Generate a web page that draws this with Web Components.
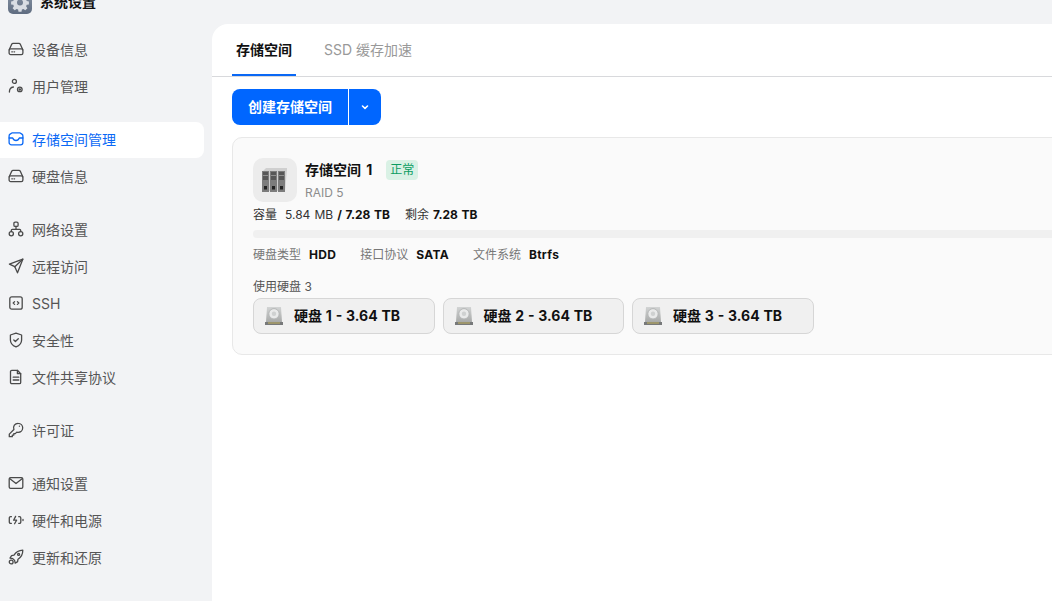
<!DOCTYPE html>
<html lang="zh">
<head>
<meta charset="utf-8">
<title>系统设置</title>
<style>
    html, body { margin: 0; height: 100%; overflow: hidden; background: #f2f3f5; }
    body {
        font-family: Inter, "Noto Sans CJK SC", sans-serif;
        font-size: 12px;
        color: #111;
    }
</style>
</head>
<body>
<settings-app>
    <settings-nav slot="nav"></settings-nav>
    <tab-bar slot="main"></tab-bar>
    <create-button slot="main"></create-button>
    <storage-card slot="main" name="存储空间 1" raid="RAID 5" used="5.84 MB" total="7.28 TB" free="7.28 TB">
        <disk-chip>硬盘 1 - 3.64 TB</disk-chip>
        <disk-chip>硬盘 2 - 3.64 TB</disk-chip>
        <disk-chip>硬盘 3 - 3.64 TB</disk-chip>
    </storage-card>
</settings-app>

<script>
const ICONS = {
    drive: `<path d="M1.200 8.800 3.700 3.200a1.500 1.500 0 0 1 1.400-.9h5.800a1.500 1.500 0 0 1 1.400.9l2.500 5.600"/><rect x="1.100" y="7.800" width="13.800" height="5.800" rx="1.600"/><path d="M3.800 10.800h.6M6 10.800h.6"/>`,
    inbox: `<path d="M1.100 8V5a2.200 2.200 0 0 1 1-1.900l2.200-1.300h7.400l2.200 1.300a2.200 2.200 0 0 1 1 1.900v6.400a2.400 2.400 0 0 1-2.400 2.400H3.500a2.400 2.400 0 0 1-2.400-2.400Z"/><path d="M1.100 7h3.600c.6 1.600 1.800 2.500 3.300 2.500s2.700-.9 3.300-2.500h3.600"/>`,
    user: `<circle cx="6.400" cy="3.400" r="2"/><path d="M1.400 14c0-2.700 1.500-4.700 4-5"/><circle cx="11.800" cy="11.400" r="2.300"/><circle cx="11.800" cy="11.400" r=".6"/>`,
    network: `<rect x="5.900" y="1.200" width="4.200" height="4.200" rx="1.200"/><rect x="1.200" y="10.600" width="4.200" height="4.200" rx="2.100"/><rect x="10.600" y="10.600" width="4.200" height="4.200" rx="2.100"/><path d="M8 5.400v3M3.300 10.600V9.400a1 1 0 0 1 1-1h7.400a1 1 0 0 1 1 1v1.200"/>`,
    send: `<path d="M14.800 1.200 1.400 6.100l5.400 2.600 2.700 6.100Z"/><path d="M14.800 1.200 6.800 8.700"/>`,
    ssh: `<rect x="1.800" y="1.800" width="12.400" height="12.400" rx="2"/><path d="M6.600 6.600 5.200 8l1.400 1.400M9.400 6.600 10.800 8 9.400 9.400"/>`,
    shield: `<path d="M8 1.200 13.600 3v5c0 3.300-2.300 5.600-5.600 6.900C4.700 13.600 2.400 11.300 2.400 8V3Z"/><path d="m5.800 8 1.600 1.500 2.900-2.800"/>`,
    file: `<path d="M3.800 1.300h5.600l3.300 3.400v8.700a1.300 1.300 0 0 1-1.300 1.300H3.800a1.300 1.300 0 0 1-1.300-1.300V2.600a1.300 1.300 0 0 1 1.300-1.300Z"/><path d="M9.400 1.300v3.400h3.300M5.200 8.200h5.600M5.200 11h5.600"/>`,
    key: `<path d="M10.200 1.300a4.500 4.500 0 0 1 0 9c-.5 0-1-.1-1.400-.2L7.300 11.600H5.800v1.500H4.300v1.600H1.300v-2.600l4.600-4.600a4.500 4.500 0 0 1 4.300-6.200Z"/><path d="M11.400 4.200h.1"/>`,
    mail: `<rect x="1.200" y="2.600" width="13.600" height="10.800" rx="1.400"/><path d="m1.600 3.600 6.400 5 6.400-5"/>`,
    power: `<path d="M3.400 4.700H2.600a1.300 1.300 0 0 0-1.300 1.300v4a1.300 1.300 0 0 0 1.300 1.300h.8M10.700 4.700h.8A1.300 1.300 0 0 1 12.800 6v4a1.300 1.300 0 0 1-1.300 1.300h-.8"/><path d="M7.600 4.400 5.600 8.200h3L6.600 11.800M15 7.400v1.200"/>`,
    rocket: `<path d="M14.800 1.200c-4 .2-6.800 1.800-8.800 5L3.600 6.600 2 9l2.800.6 1.800 1.800.6 2.800 2.400-1.600.4-2.400c3.200-2 4.800-4.800 4.800-9Z"/><circle cx="10.600" cy="5.400" r="1"/><circle cx="3.200" cy="13" r="1.900"/>`
};

const NAV_GROUPS = [
    [["drive", "设备信息"], ["user", "用户管理"]],
    [["inbox", "存储空间管理", true], ["drive", "硬盘信息"]],
    [["network", "网络设置"], ["send", "远程访问"], ["ssh", "SSH"], ["shield", "安全性"], ["file", "文件共享协议"]],
    [["key", "许可证"]],
    [["mail", "通知设置"], ["power", "硬件和电源"], ["rocket", "更新和还原"]]
];

const appTemplate = document.createElement("template");
appTemplate.innerHTML = `
    <style>
        :host {
            display: flex;
            height: 601px;
            overflow: hidden;
        }
        #side {
            width: 212px;
            flex: none;
        }
        #main {
            flex: 1;
            min-width: 0;
            margin-top: 24px;
            background: #fff;
            border-top-left-radius: 16px;
        }
    </style>
    <div id="side"><slot name="nav"></slot></div>
    <div id="main"><slot name="main"></slot></div>
`;

class SettingsApp extends HTMLElement {
    constructor() {
        super();
        this.attachShadow({mode: "open"}).appendChild(appTemplate.content.cloneNode(true));
    }
}
customElements.define("settings-app", SettingsApp);

class NavItem extends HTMLElement {
    static get observedAttributes() {
        return ["icon"];
    }

    constructor() {
        super();
        this.attachShadow({mode: "open"}).innerHTML = `
            <style>
                :host {
                    display: flex;
                    align-items: center;
                    gap: 8px;
                    width: 204px;
                    height: 36px;
                    box-sizing: border-box;
                    padding: 0 0 2px 8px;
                    border-radius: 0 8px 8px 0;
                    font-size: 14px;
                    color: #555;
                }
                :host([active]) {
                    background: #fff;
                    color: #0a68f5;
                }
                svg {
                    width: 16px;
                    height: 16px;
                    flex: none;
                    fill: none;
                    stroke: currentColor;
                    stroke-width: 1.300;
                    stroke-linecap: round;
                    stroke-linejoin: round;
                }
                :host(:not([active])) svg { color: #4a4a4a; }
            </style>
            <svg viewBox="0 0 16 16"></svg>
            <span><slot></slot></span>
        `;
        this.iconElem = this.shadowRoot.querySelector("svg");
    }

    attributeChangedCallback(name, oldValue, newValue) {
        if (name === "icon") this.iconElem.innerHTML = ICONS[newValue];
    }
}
customElements.define("nav-item", NavItem);

class SettingsNav extends HTMLElement {
    constructor() {
        super();
        const root = this.attachShadow({mode: "open"});
        root.innerHTML = `
            <style>
                :host { display: block; }
                #head {
                    display: flex;
                    align-items: center;
                    gap: 8px;
                    height: 24px;
                    margin: -10px 0 18px 8px;
                    font-size: 14px;
                    font-weight: 600;
                    color: #111;
                }
                #head span { padding-bottom: 2px; }
                #logo {
                    width: 24px;
                    height: 24px;
                    border-radius: 5px;
                    background: linear-gradient(#8b97a8, #5f6c80);
                }
                #logo svg { display: block; }
                .group {
                    display: flex;
                    flex-direction: column;
                    gap: 1px;
                    margin-bottom: 17px;
                }
            </style>
            <div id="head">
                <div id="logo">
                    <svg width="24" height="24" viewBox="0 0 24 24" fill="#d9dde3">
                        <path fill-rule="evenodd" d="M10.500 4h3l.4 2.200 1.500.6 1.900-1.300 2.100 2.100-1.300 1.900.6 1.500 2.200.4v3l-2.200.4-.6 1.500 1.300 1.900-2.100 2.100-1.900-1.300-1.500.6-.4 2.200h-3l-.4-2.200-1.500-.6-1.900 1.300-2.100-2.100 1.300-1.900-.6-1.500-2.200-.4v-3l2.200-.4.6-1.500-1.300-1.900 2.100-2.100 1.900 1.300 1.500-.6ZM12 9.500a3 3 0 1 0 0 6 3 3 0 0 0 0-6Z"/>
                    </svg>
                </div>
                <span>系统设置</span>
            </div>
        `;
        for (const group of NAV_GROUPS) {
            const groupElem = document.createElement("div");
            groupElem.className = "group";
            for (const [icon, label, active] of group) {
                const item = document.createElement("nav-item");
                item.setAttribute("icon", icon);
                if (active) item.setAttribute("active", "");
                item.textContent = label;
                groupElem.appendChild(item);
            }
            root.appendChild(groupElem);
        }
    }
}
customElements.define("settings-nav", SettingsNav);

class TabBar extends HTMLElement {
    constructor() {
        super();
        this.attachShadow({mode: "open"}).innerHTML = `
            <style>
                :host {
                    display: flex;
                    gap: 24px;
                    height: 53px;
                    box-sizing: border-box;
                    padding-left: 20px;
                    border-bottom: 1px solid #d8d9dc;
                    font-size: 14px;
                    color: #999;
                }
                div {
                    height: 52px;
                    box-sizing: border-box;
                    padding: 0 4px;
                    line-height: 52px;
                }
                .on {
                    color: #111;
                    font-weight: 600;
                    border-bottom: 2px solid #0a68f5;
                }
            </style>
            <div class="on">存储空间</div>
            <div>SSD 缓存加速</div>
        `;
    }
}
customElements.define("tab-bar", TabBar);

class CreateButton extends HTMLElement {
    constructor() {
        super();
        this.attachShadow({mode: "open"}).innerHTML = `
            <style>
                :host {
                    display: flex;
                    width: 149px;
                    height: 36px;
                    margin: 12px 0 12px 20px;
                    border-radius: 8px;
                    overflow: hidden;
                    background: #0066ff;
                    color: #fff;
                    font-size: 14px;
                    font-weight: 600;
                }
                #label {
                    width: 116px;
                    text-align: center;
                    line-height: 36px;
                    border-right: 1px solid #fff;
                }
                #more {
                    flex: 1;
                    display: flex;
                    align-items: center;
                    justify-content: center;
                }
            </style>
            <div id="label">创建存储空间</div>
            <div id="more">
                <svg width="10" height="10" viewBox="0 0 10 10" fill="none" stroke="#fff" stroke-width="1.600" stroke-linecap="round" stroke-linejoin="round"><path d="M2.500 4 5 6.300 7.500 4"/></svg>
            </div>
        `;
    }
}
customElements.define("create-button", CreateButton);

class DiskChip extends HTMLElement {
    constructor() {
        super();
        this.attachShadow({mode: "open"}).innerHTML = `
            <style>
                :host {
                    display: flex;
                    align-items: center;
                    gap: 10px;
                    width: 181.500px;
                    height: 36px;
                    box-sizing: border-box;
                    padding-left: 10px;
                    border: 1px solid #d6d6d6;
                    border-radius: 8px;
                    background: #f0f0f0;
                    font-size: 14px;
                    font-weight: 700;
                    word-spacing: .5px;
                    color: #111;
                }
                span { padding-bottom: 2px; }
                svg { flex: none; display: block; }
            </style>
            <svg width="20" height="20" viewBox="0 0 20 20">
                <defs>
                    <linearGradient id="b" x1="0" y1="0" x2="0" y2="1">
                        <stop offset="0" stop-color="#d2d4d4"/>
                        <stop offset="1" stop-color="#a8aaa9"/>
                    </linearGradient>
                </defs>
                <path d="M3 1h14l1 15H2Z" fill="url(#b)"/>
                <circle cx="10" cy="7.800" r="5.200" fill="#e9eaea" stroke="#b4b6b6"/>
                <circle cx="10" cy="7.800" r="2.200" fill="#cfd1d1"/>
                <rect x="1" y="16" width="18" height="3" fill="#77797a"/>
                <path d="M4 17h12" stroke="#c5b45e"/>
            </svg>
            <span><slot></slot></span>
        `;
    }
}
customElements.define("disk-chip", DiskChip);

class StorageCard extends HTMLElement {
    constructor() {
        super();
        const a = name => this.getAttribute(name);
        this.attachShadow({mode: "open"}).innerHTML = `
            <style>
                :host {
                    display: block;
                    height: 218px;
                    box-sizing: border-box;
                    margin-left: 20px;
                    margin-right: -40px;
                    padding: 20px 20px 0;
                    border: 1px solid #e8e8e8;
                    border-radius: 10px;
                    background: #fafafa;
                    font-size: 12px;
                    color: #333;
                }
                b { font-weight: 700; color: #111; }
                #top { display: flex; gap: 8px; }
                #art {
                    width: 44px;
                    height: 44px;
                    border-radius: 10px;
                    background: #ececec;
                    display: flex;
                    align-items: center;
                    justify-content: center;
                }
                #name {
                    display: flex;
                    align-items: center;
                    gap: 14px;
                    height: 24px;
                    font-size: 14px;
                    font-weight: 700;
                    word-spacing: 2px;
                    color: #111;
                }
                #title { padding-bottom: 2px; }
                #badge {
                    width: 32px;
                    height: 20px;
                    line-height: 20px;
                    text-align: center;
                    border-radius: 4px;
                    background: #d9f1e5;
                    color: #0a9c61;
                    font-size: 12px;
                    font-weight: 400;
                }
                #raid { margin-top: 2px; line-height: 18px; color: #8c8c8c; }
                #usage {
                    display: flex;
                    gap: 15px;
                    line-height: 20px;
                    margin-top: 3px;
                    word-spacing: .75px;
                }
                #usage i { font-style: normal; margin-right: 8px; }
                #usage span + span i { margin-right: 4px; }
                #bar {
                    height: 8px;
                    margin-top: 5px;
                    border-radius: 4px;
                    background: #f0f0f0;
                }
                #meta {
                    display: flex;
                    gap: 24px;
                    margin-top: 7px;
                    line-height: 20px;
                    color: #777;
                }
                #meta b { margin-left: 8px; letter-spacing: .3px; }
                #count { margin-top: 12px; line-height: 20px; color: #555; }
                #disks { display: flex; gap: 8px; margin-top: 1px; }
            </style>
            <div id="top">
                <div id="art">
                    <svg width="26" height="26" viewBox="0 0 26 26">
                        <path d="M1 4 4 1h21v2l-2 21H1Z" fill="#cfcfcf"/>
                        <path d="M0 4h7v21H0zM8 4h7v21H8zM16 4h7v21h-7z" fill="#7c7c7c"/>
                        <path d="M1 5h5v8H1zM9 5h5v8H9zM17 5h5v8h-5z" fill="#575757"/>
                        <path d="M1 8.500h5M9 8.500h5M17 8.500h5" stroke="#8f8f8f"/>
                        <path d="M2 19h3v3.500H2zM10 19h3v3.500h-3zM18 19h3v3.500h-3z" fill="#222"/>
                    </svg>
                </div>
                <div>
                    <div id="name"><span id="title">${a("name")}</span><span id="badge">正常</span></div>
                    <div id="raid">${a("raid")}</div>
                </div>
            </div>
            <div id="usage">
                <span><i>容量</i>${a("used")} <b>/ ${a("total")}</b></span>
                <span><i>剩余</i><b>${a("free")}</b></span>
            </div>
            <div id="bar"></div>
            <div id="meta">
                <span>硬盘类型<b>HDD</b></span>
                <span>接口协议<b>SATA</b></span>
                <span>文件系统<b>Btrfs</b></span>
            </div>
            <div id="count">使用硬盘 3</div>
            <div id="disks"><slot></slot></div>
        `;
    }
}
customElements.define("storage-card", StorageCard);
</script>
</body>
</html>
